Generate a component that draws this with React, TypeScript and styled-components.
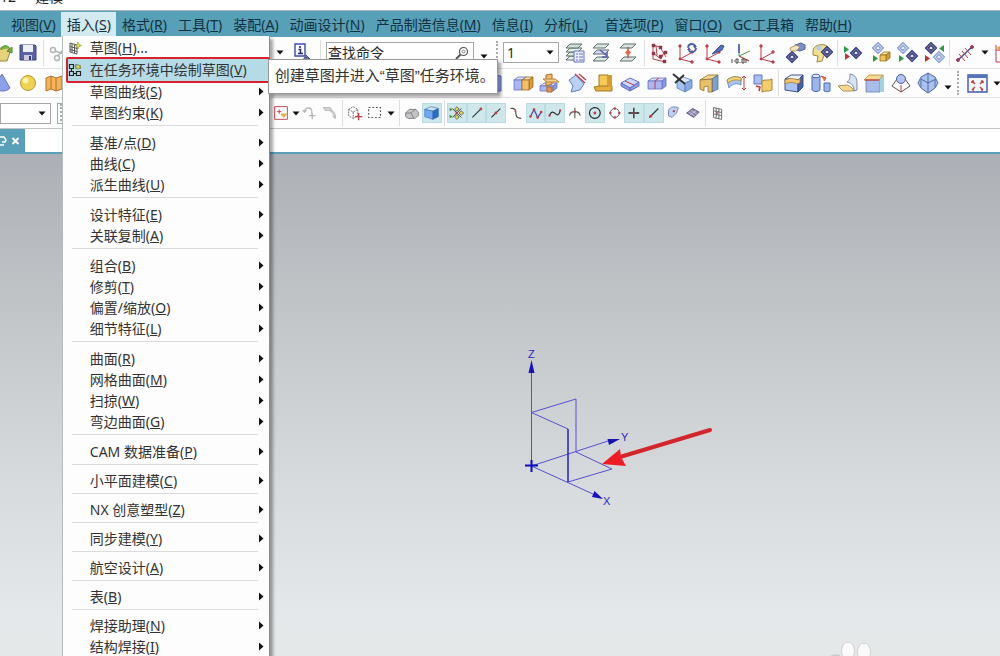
import React from 'react';
import styled, { createGlobalStyle, css } from 'styled-components';

const Global = createGlobalStyle`
  * { box-sizing: border-box; }
  body {
    margin: 0;
    font-family: "Noto Sans", "Noto Sans CJK SC", sans-serif;
    font-size: 14px;
    line-height: 20px;
    color: #2b2b2b;
  }
  button, input, select { font: inherit; color: inherit; }
`;

const teal = '#57a0b8';

const Page = styled.div`
  display: flex;
  flex-direction: column;
  height: 100vh;
  overflow: hidden;
  background: #fff;
`;

const TitleBar = styled.header`
  display: flex;
  align-items: flex-end;
  height: 10px;
  padding-bottom: 3px;
  overflow: hidden;
  white-space: pre;
  color: #222;
`;

const MenuBar = styled.nav`
  display: flex;
  height: 27px;
  padding-left: 5px;
  background: ${teal};
  border-top: 1px solid #a9b6ba;
  color: #12303f;
`;

const MenuSlot = styled.div<{ $apart?: boolean }>`
  position: relative;
  display: flex;
  padding-top: 1px;
  margin-left: ${(p) => (p.$apart ? '6px' : '0')};
`;

const MenuButton = styled.button<{ $open?: boolean }>`
  padding: 0 5px 0 6px;
  border: 0;
  white-space: nowrap;
  background: ${(p) => (p.$open ? '#d3eaf0' : 'transparent')};
`;

const DropDown = styled.div`
  position: absolute;
  z-index: 5;
  top: 25px;
  left: 1px;
  width: 208px;
  padding: 1px 0 4px 4px;
  background: #fdfdfd;
  border-left: 1px solid #b5bcc0;
  border-right: 1px solid #8c8c8c;
  box-shadow: 3px 3px 3px rgba(0, 0, 0, 0.35);
  color: #333;
`;

const Separator = styled.hr<{ $compact?: boolean }>`
  height: 1px;
  margin: 2px 11px ${(p) => (p.$compact ? '5px' : '6px')} 5px;
  border: 0;
  background: #dcdcdc;
`;

const Command = styled.button<{ $tall?: boolean; $marked?: boolean }>`
  position: relative;
  display: flex;
  align-items: center;
  width: 100%;
  height: ${(p) => (p.$tall ? '22px' : '21px')};
  padding: 0 5px 0 0;
  border: 0;
  background: transparent;
  text-align: left;
  white-space: nowrap;
  ${(p) =>
    p.$marked &&
    css`
      background: #b4dbe6;
      &::after {
        content: '';
        position: absolute;
        inset: -2px -1px -2px -1px;
        border: 2px solid #d9202c;
        border-radius: 2px;
      }
    `}
`;

const CommandIcon = styled.span`
  display: flex;
  width: 23px;
  padding-left: 1px;
`;

const CommandText = styled.span`
  flex: 1;
`;

const Tip = styled.div`
  position: absolute;
  z-index: 6;
  top: 48px;
  left: 207px;
  height: 35px;
  padding: 6px 9px 0 6px;
  width: 230px;
  background: #fff;
  border: 1px solid #999;
  box-shadow: 3px 3px 3px rgba(0, 0, 0, 0.35);
  font-family: "Liberation Sans", "Noto Sans CJK SC", sans-serif;
  font-size: 15px;
  white-space: nowrap;
  color: #333;
`;

const ToolRow = styled.div<{ $height: number; $last?: boolean }>`
  display: flex;
  align-items: center;
  flex: none;
  height: ${(p) => p.$height}px;
  overflow: hidden;
  border-bottom: 1px solid ${(p) => (p.$last ? '#c4c4c6' : '#e2e2e2')};
  background: #fdfdfd;
`;

const Lead = styled.div<{ $width: number; $pull?: boolean }>`
  display: flex;
  align-items: center;
  flex: none;
  width: ${(p) => p.$width}px;
  & > :first-child {
    margin-left: ${(p) => (p.$pull ? '-11px' : '0')};
  }
`;

const Space = styled.span<{ $width: number }>`
  flex: none;
  width: ${(p) => p.$width}px;
`;

const Cluster = styled.div<{ $width: number }>`
  display: grid;
  grid-auto-flow: column;
  grid-auto-columns: 1fr;
  flex: none;
  width: ${(p) => p.$width}px;
`;

const ToolButton = styled.button<{ $on?: boolean; $small?: boolean }>`
  display: flex;
  align-items: center;
  justify-content: center;
  min-width: 0;
  height: ${(p) => (p.$small ? '20px' : '26px')};
  padding: 0;
  border: 0;
  background: ${(p) => (p.$on ? '#cde7ea' : 'transparent')};
  box-shadow: ${(p) => (p.$on ? 'inset 0 0 0 1px #b9dce2' : 'none')};
`;

const CaretButton = styled.button<{ $width: number; $low?: boolean }>`
  display: flex;
  align-items: center;
  justify-content: center;
  flex: none;
  width: ${(p) => p.$width}px;
  height: 22px;
  padding: ${(p) => (p.$low ? '8px 0 0' : '0')};
  border: 0;
  background: transparent;
`;

const Divider = styled.span`
  flex: none;
  width: 1px;
  height: 26px;
  margin: 0 2px;
  background: #dedede;
`;

const Grip = styled.span`
  flex: none;
  width: 3px;
  height: 24px;
  margin: 0 4px 0 2px;
  border-left: 2px dotted #a9a9a9;
`;

const Field = styled.label<{ $width: number }>`
  display: flex;
  align-items: center;
  justify-content: space-between;
  flex: none;
  width: ${(p) => p.$width}px;
  height: 21px;
  padding-right: 4px;
  border: 1px solid #a6a6a6;
  background: #fff;
`;

const Well = styled.div`
  flex: 1;
  display: flex;
  height: 21px;
  margin: 0 6px;
  border: 1px solid #a6a6a6;
  overflow: hidden;
`;

const TextInput = styled.input`
  flex: 1;
  min-width: 0;
  height: 19px;
  padding: 0 1px;
  border: 0;
  outline: 0;
  background: transparent;
`;

const Choice = styled.select`
  flex: 1;
  min-width: 0;
  height: 19px;
  padding: 0 3px;
  border: 0;
  outline: 0;
  appearance: none;
  background: transparent;
`;

const TabStrip = styled.div`
  display: flex;
  flex: none;
  height: 25px;
  border-bottom: 2px solid ${teal};
  background: #fff;
`;

const Tab = styled.button`
  display: flex;
  align-items: center;
  width: 25px;
  padding: 0;
  border: 0;
  background: ${teal};
`;

const Viewport = styled.main`
  position: relative;
  flex: 1;
  overflow: hidden;
  background: linear-gradient(#acb0b6 0, #c7cacc 39%, #d8dcde 68%, #e4e8ea 92%, #e4e8e9 100%);
`;

const Datum = styled.svg`
  position: absolute;
  top: 186px;
  left: 50%;
`;

const Watermark = styled.svg`
  position: absolute;
  right: 120px;
  bottom: 0;
`;

const Caret = () => (
  <svg width="8" height="5" viewBox="0 0 8 5" aria-hidden="true">
    <path d="M0.5 0.5h7L4 4.5z" fill="#111" />
  </svg>
);

const Arrow = () => (
  <svg width="6" height="9" viewBox="0 0 6 9" aria-hidden="true">
    <path d="M1 0.5L5.5 4.5L1 8.5z" fill="#111" />
  </svg>
);

const B = '#6672c4';
const O = '#e8a23c';
const G = '#5c6f6b';
const R = '#c23a48';
const N = '#3c3f78';

const box = (x: number, y: number, w: number, h: number, face: string, top: string, side: string, edge: string) => (
  <g stroke={edge} strokeWidth="0.8" strokeLinejoin="round">
    <path d={`M${x} ${y + 3}l4-3h${w}l-4 3z`} fill={top} />
    <path d={`M${x + w} ${y + 3}l4-3v${h}l-4 3z`} fill={side} />
    <path d={`M${x} ${y + 3}h${w}v${h}h-${w}z`} fill={face} />
  </g>
);

const sheet = (y: number, fill: string) => (
  <path d={`M2 ${y + 4}l4-4h12l-4 4z`} fill={fill} stroke={G} strokeWidth="1" />
);

const gem = (x: number, y: number, dark: boolean) => (
  <g stroke={dark ? N : '#8da0d4'} strokeWidth="1.2" strokeLinejoin="round">
    <path d={`M${x} ${y - 5.5}l5.5 5.5l-5.5 5.5l-5.5-5.5z`} fill={dark ? '#747ab0' : '#cfdcf5'} />
    <path d={`M${x} ${y - 2.5}l2.5 2.5l-2.5 2.5l-2.5-2.5z`} fill="#f0f3fb" />
  </g>
);

const play = (x: number, y: number, fill: string, flip = false) => (
  <path d={flip ? `M${x + 5} ${y}v7l-5-3.5z` : `M${x} ${y}v7l5-3.5z`} fill={fill} />
);

const axes = (
  <g stroke={R} strokeWidth="1" fill={R}>
    <path d="M4 5v12l12 3M4 17l11-6" fill="none" />
    <circle cx="4" cy="4" r="1.2" /><circle cx="16" cy="20" r="1.2" /><circle cx="16" cy="10" r="1.2" /><circle cx="4" cy="17" r="1" />
  </g>
);

const art: Record<string, React.ReactNode> = {
  open: <g><path d="M2 9l5-3h10l2 4-3 9H4z" fill="#e6d27a" stroke="#9a8a3a" /><path d="M10 8c0-5 7-6 9-1l-3 2 5 2V5" fill="#79b84e" stroke="#4a8a2c" /></g>,
  save: <g><path d="M3 3h15l1 1v14H3z" fill="#5b62a6" stroke="#3d4380" /><path d="M6 3h10v7H6z" fill="#eef0fa" /><path d="M7 13h8v5H7z" fill="#ccd" /><path d="M12 14h2v4h-2z" fill="#33386e" /></g>,
  cut: <g stroke="#b4b4b4" strokeWidth="1.4" fill="none"><circle cx="5" cy="8" r="2.5" /><circle cx="9" cy="16" r="2.5" /><path d="M7 9l12 4M10 14L18 4" /></g>,
  info: <g><path d="M3 2h10v12H3z" fill="#fff" stroke="#3e47a8" strokeWidth="1.4" /><path d="M8 4v2M6.500 7.500h2v4M6 11.500h5" stroke="#222a6a" strokeWidth="1.6" fill="none" /><path d="M11 18l2-3 3 1 3 3M14 13l6 6h-6z" fill="#8f95c8" stroke="#4a508c" /></g>,
  layers: <g>{sheet(14, '#e6efe9')}{sheet(10, '#dbe8e2')}{sheet(6, '#e6efe9')}{sheet(2, '#cfe0d8')}<path d="M10 9h10v11H10z" fill="#eceefd" stroke={B} /><path d="M12 12h2M15 12h4M12 15h2M15 15h4M12 18h2M15 18h4" stroke={B} /></g>,
  layerMove: <g>{sheet(15, '#dbe8e2')}{sheet(8, '#d7dcf5')}{sheet(2, '#dbe8e2')}<path d="M9 8l7 6M16 10v5h-5" stroke="#5b64a4" strokeWidth="1.6" fill="none" /></g>,
  layerPick: <g>{sheet(15, '#dbe8e2')}{sheet(2, '#dbe8e2')}<path d="M10 5v11" stroke={R} strokeWidth="1.200" /><path d="M10 7l3 3.500-3 3.500-3-3.500z" fill="#ee6a45" /></g>,
  wcsDyn: <g stroke={R} fill="none"><path d="M4 3v14l12 3M4 3l7 2 6 10M4 11l8 6 3-7M7 4l1 9" /><path d="M3 2h3v3H3zM10 4h3v3h-3zM3 10h3v3H3zM10 13h3v3h-3zM15 9h3v3h-3zM14 18h3v3h-3z" fill="#6a4052" strokeWidth="0.500" /></g>,
  wcsRot: <g>{axes}<circle cx="16" cy="6" r="4" stroke="#4a5ca4" strokeWidth="1.800" fill="none" strokeDasharray="10 2.500" /><path d="M11 8l2-3 2 3zM17 4l4 0-2 3z" fill="#4a5ca4" /></g>,
  wcsSet: <g>{axes}<path d="M9 12l9-9 3 1-2 4-7 3z" fill="#5570bd" stroke="#3a4f94" /></g>,
  wcsAbs: <g><path d="M9 3v11l10 5M9 14l11-5" stroke="#4d9a56" fill="none" /><path d="M9 2v9" stroke="#4a58b4" strokeWidth="1.600" /><path d="M9 14l10 5" stroke={R} /><path d="M2 17v4M4 19h1M6 17h2v4H6zM10 20v1M12 17h2v4h-2zM16 17v4" stroke="#333" strokeWidth="0.900" fill="none" /></g>,
  wcs: axes,
  show: <g>{gem(8, 15, true)}<path d="M11 3l6-2 4 2v4l-5 2-6-2z" fill="#7a8fcc" stroke="#52649f" /><path d="M6 6l6-3 4 2-4 4-5 0z" fill="#f4e3b8" stroke="#a8874a" strokeWidth="0.800" /></g>,
  edit: <g><path d="M2 8c1-6 14-8 16-1l2 3-6 1-3 8-5 1 1-6-5-1z" fill="#f1df8d" stroke="#9b8742" /><circle cx="8" cy="6" r="2.500" fill="#b3cbef" />{gem(16, 10, true)}</g>,
  flow: <g>{play(2, 4, '#2d9b44')}{play(3, 11, '#c33038')}{gem(14, 11, true)}</g>,
  flowBox: <g>{gem(9, 6, false)}{play(4, 13, '#2d9b44')}{box(11, 10, 6, 6, '#f0c552', '#fae39a', '#d5a02e', '#93701e')}</g>,
  flowDown: <g>{gem(7, 6, false)}{play(3, 13, '#2d9b44')}{gem(16, 14, true)}</g>,
  flowSwap: <g>{gem(8, 6, true)}{play(16, 3, '#2d9b44', true)}{play(2, 13, '#c33038')}{gem(16, 15, false)}</g>,
  measure: <g stroke={R} fill="none"><path d="M3 19L19 4" stroke="#4a4f94" strokeWidth="1.500" /><path d="M5 12l6 7M8 9l6 7M11 6l6 7" /><circle cx="4" cy="18" r="1.500" fill="#4a4f94" /><circle cx="18" cy="5" r="1.500" fill="#4a4f94" /></g>,
  chart: <g><path d="M3 3v17h17" fill="none" stroke={R} /><path d="M3 8c8 0 9 6 16 8" stroke={R} fill="none" /><path d="M5 5l6 6 8-8" stroke={O} strokeWidth="3" fill="none" /></g>,
  cone: <path d="M11 2l8 14c-3 4-12 4-16 0z" fill="#8fa0ea" stroke={B} />,
  ball: <g><circle cx="11" cy="11" r="7.500" fill="#efd350" stroke="#b39a35" /><circle cx="8.500" cy="8.500" r="3" fill="#fbf0a8" /></g>,
  book: <path d="M3 6l5-2 5 2 6-2v13l-6 2-5-2-5 2zM8 4v13M13 6v13" fill="#f3b356" stroke="#b4742a" />,
  slab: <path d="M6 19V8c0-4 4-5 9-4v15z" fill="#9cadf0" stroke={B} />,
  split: <g>{box(1, 5, 8, 10, '#a9b8f2', '#d8e0fb', '#8b9ae0', B)}{box(9, 5, 7, 10, '#f3c069', '#fae0a4', '#dd9a3a', '#a06a24')}</g>,
  cross: <g>{box(1, 11, 13, 5, '#a9b8f2', '#d8e0fb', '#8b9ae0', B)}<path d="M7 3l6-1v10l-6 2z" fill="#f3bd68" stroke="#a86e28" /><path d="M4 7h12l4 3H8z" fill="#f8d08a" stroke="#b8803a" /><path d="M8 15h5v5H8z" fill="#ee8e4a" stroke="#a86e28" /></g>,
  draft: <g><path d="M3 8l7-5 8 9-4 6-9 2 2-6z" fill="#b8d2f4" stroke="#5f83c0" /><path d="M9 2l10 9M13 2l7 6" stroke={R} strokeWidth="1.300" /></g>,
  block: <g><path d="M7 3h9v13H7z" fill="#f4cb55" stroke="#a07b27" /><path d="M2 15l5-1h13v5H4z" fill="#e8af3b" stroke="#a07b27" /><path d="M16 3h4v12h-4z" fill="#d99a30" /></g>,
  plate: <g strokeLinejoin="round"><path d="M2 11l9-5 9 4-9 6z" fill="#cfd8fa" stroke={B} /><path d="M2 11v3l9 5v-3zM11 16v3l9-5v-4z" fill="#8d9bea" stroke={B} /><path d="M6 9l9 4" stroke={R} /></g>,
  bar: <g>{box(2, 6, 14, 8, '#a9b8f2', '#d8e0fb', '#8b9ae0', B)}<path d="M9 17V9l4-3" stroke={R} fill="none" /></g>,
  trim: <g stroke="#5c82bd" strokeWidth="0.800" strokeLinejoin="round"><path d="M5 8l6-3 9 3-7 3z" fill="#dbe8fb" /><path d="M5 8l8 3v9l-8-4z" fill="#a3c2ee" /><path d="M13 11l7-3v8l-7 4z" fill="#86abe2" /><path d="M1 2l12 10M12 3L3 11" stroke="#333" strokeWidth="1.800" /></g>,
  shell: <g strokeLinejoin="round" strokeWidth="0.800"><path d="M1 8l8-5 10 0-6 4z" fill="#f6d88a" stroke="#8f6f2e" /><path d="M13 7l6-4v14l-6 3z" fill="#7c9fd8" stroke="#4c6ca0" /><path d="M1 8l12-1v13H9v-6l-4 1v4l-4-2z" fill="#e9c065" stroke="#8f6f2e" /></g>,
  bend: <g><path d="M2 8c5-4 10-4 14-2v7c-4-2-8-2-12 3z" fill="#a9c6ee" stroke="#5c80b8" strokeWidth="0.800" /><path d="M2 8c5-4 10-4 14-2v3C12 7 6 8 3 11z" fill="#f3d473" stroke="#a58a39" strokeWidth="0.800" /><path d="M19 4v14M17 6l2-2 2 2M17 16l2 2 2-2" stroke={R} fill="none" /></g>,
  replace: <g><path d="M2 3h8v9H2z" fill="#a9c0f0" stroke={B} /><path d="M10 9c4-2 7 0 10-2v11c-3 2-7 0-10 2z" fill="#f3ce6b" stroke="#a8833a" /><path d="M4 14l4 1-1 4" stroke={R} fill="none" strokeWidth="1.600" /></g>,
  cube: <g strokeLinejoin="round" strokeWidth="0.900"><path d="M2 7l6-4h12l-5 5z" fill="#eef2fc" stroke="#2f4480" /><path d="M2 7l13 1v12L2 18z" fill="#a9c2f2" stroke="#2f4480" /><path d="M15 8l5-5v12l-5 5z" fill="#4462a8" stroke="#2f4480" /><path d="M2 8c4-2 8-2 13 0l2-2v4l-2 2c-5-2-9-2-13 0z" fill="#f3c46c" stroke="#9a6d2b" strokeWidth="0.700" /></g>,
  tubes: <g stroke="#4d68ab"><path d="M2 4v14c2 2 6 2 8 0V4z" fill="#9db5ec" /><ellipse cx="6" cy="4" rx="4" ry="1.800" fill="#dce6fb" /><path d="M14 11v8c2 1 4 1 6 0v-8z" fill="#9db5ec" /><path d="M11 4l5 2-2 3" stroke={R} fill="#ee8a3c" /></g>,
  flange: <g><path d="M13 2c6 1 7 5 7 10v6l-3 1c0-5-2-8-7-9 3-2 3-4 3-8z" fill="#d6e2f6" stroke="#65718e" strokeWidth="0.800" /><path d="M1 14l9-1c3 1 6 3 7 6H6z" fill="#f4d88d" stroke="#9b8243" strokeWidth="0.800" /></g>,
  face: <g><path d="M3 7h14v13H3z" fill="#a9bde8" stroke="#6a7fb2" strokeWidth="0.800" /><path d="M17 3h4v17h-4z" fill="#9fd4e2" /><path d="M1 8l5-5h14l-4 5z" fill="#f3db90" stroke="#b58d3a" strokeWidth="0.800" /><path d="M2 8h14" stroke={R} strokeWidth="1.300" /></g>,
  pyramid: <g><path d="M7 7L2 14l9 6 9-6-5-7" fill="#fff" stroke="#6a4a4a" /><path d="M11 20v-7" stroke={R} /><circle cx="11" cy="7" r="4.500" fill="#b3c3f0" stroke="#4a5a9c" /></g>,
  octa: <g stroke="#4f6aa4" strokeLinejoin="round"><path d="M11 1l7 4 3 6-3 5-7 5-7-5-3-5 3-6z" fill="#aac3ee" /><path d="M11 1v10M4 7l7 4 8-4M11 11v10M4 7v8M18 7v8" fill="none" /></g>,
  fit: <g><path d="M2 3h19v17H2z" fill="#f4f6fc" stroke="#3f58a8" strokeWidth="1.400" /><path d="M2 3h19v3H2z" fill="#5873bd" /><path d="M6 9l3 3M17 9l-3 3M6 18l3-3M17 18l-3-3M6 9h2M6 9v2M17 9h-2M17 9v2M6 18h2M17 18h-2" stroke="#c2453c" strokeWidth="1.500" /></g>,
  filter: <g><path d="M4 4h14v14H4z" fill="#fff" stroke={R} /><path d="M9 7v5M6.500 9.500h5" stroke={R} /><path d="M11 12h6l-3 4z" fill="#f0c03c" stroke="#a87c20" strokeWidth="0.600" /></g>,
  undo: <g stroke="#b5b5b5" strokeWidth="1.400" fill="none"><path d="M5 10c0-6 8-6 8 0v3M3 8l2 2 2-2M10 14h7M13.500 11v7" /></g>,
  redo: <g stroke="#bdbdbd" strokeWidth="1.400" fill="#ddd"><path d="M4 5h7l2 3H6zM10 8c5 0 7 3 7 9M14 14l3 3" /></g>,
  cubeSel: <g stroke="#666" fill="none"><path d="M4 7l5-3 5 3v7l-5 3-5-3zM4 7l5 3 5-3M9 10v7" strokeDasharray="2 1" /><path d="M15 11v8M11 15h8" stroke={R} strokeWidth="1.500" /></g>,
  marquee: <path d="M4 5h13v11H4z" fill="none" stroke="#555" strokeWidth="1.200" strokeDasharray="2 2" />,
  solid: <path d="M4 11l4-4h7l3 3v4l-4 3H7l-3-2zM4 11h6l3 6M10 11l5-4" fill="#c6c6c9" stroke="#77777c" strokeWidth="0.900" />,
  blue: <g stroke="#2d62b0" strokeWidth="0.600"><path d="M3 7l7-3 8 2-6 3z" fill="#cfe4fb" /><path d="M3 7l9 2v9l-9-3z" fill="#6fa9ee" /><path d="M12 9l6-3v9l-6 3z" fill="#2f6cc8" /></g>,
  snap: <g><path d="M6 6l10 10M16 6L6 16" stroke="#333" /><path d="M11 4l2.500 2.500L11 9 8.500 6.500zM11 13l2.500 2.500L11 18l-2.500-2.500zM16 8.500l2.500 2.500-2.500 2.500-2.500-2.500z" fill="#e6d64a" stroke="#444" strokeWidth="0.800" /><path d="M3 5l3 2-3 2zM3 13l3 2-3 2z" fill="#2d8b44" /><circle cx="11" cy="11" r="1.500" fill={R} /></g>,
  end: <g><path d="M6 16L15 7" stroke="#333" strokeWidth="1.200" /><circle cx="15.500" cy="6.500" r="1.600" fill={R} /></g>,
  mid: <g><path d="M6 16L16 6" stroke="#333" strokeWidth="1.200" /><circle cx="11" cy="11" r="1.600" fill={R} /></g>,
  hook: <g><path d="M5 6c5-1 6 2 6 5s1 6 6 6" stroke="#444" fill="none" strokeWidth="1.200" /><circle cx="10.500" cy="9" r="1" fill={R} /></g>,
  zig: <g><path d="M5 15l4-8 4 9 4-6" stroke="#4a3fa0" fill="none" strokeWidth="1.300" /><g fill={R}><circle cx="5" cy="15" r="1.400" /><circle cx="9" cy="7" r="1.400" /><circle cx="13" cy="16" r="1.400" /><circle cx="17" cy="10" r="1.400" /></g></g>,
  wave: <g><path d="M5 14c2-6 5-4 7-2s4 1 5-4" stroke="#333" fill="none" strokeWidth="1.400" /><circle cx="5" cy="14" r="1.300" fill={R} /><circle cx="17" cy="8" r="1.300" fill={R} /></g>,
  meet: <g><path d="M5 14c1-6 11-6 12 0M11 5v12" stroke="#555" fill="none" strokeWidth="1.200" /><circle cx="11" cy="9.500" r="1.200" fill={R} /></g>,
  centre: <g><circle cx="11" cy="11" r="6" fill="none" stroke="#222" strokeWidth="1.300" /><circle cx="11" cy="11" r="1.600" fill={R} /></g>,
  quad: <g><circle cx="11" cy="11" r="5" fill="none" stroke="#555" /><g fill={R}><circle cx="11" cy="6" r="1.400" /><circle cx="11" cy="16" r="1.400" /><circle cx="6" cy="11" r="1.400" /><circle cx="16" cy="11" r="1.400" /></g></g>,
  plus: <g><path d="M11 5v12M5 11h12" stroke="#222" strokeWidth="1.400" /><circle cx="11" cy="11" r="1.200" fill={R} /></g>,
  onCurve: <g><path d="M6 16L16 6" stroke="#333" strokeWidth="1.300" /><circle cx="7.500" cy="14.500" r="1.600" fill={R} /></g>,
  surf: <g><path d="M5 8c2-5 8-4 11-3l-2 6-5 5-4-2z" fill="#bfd0f0" stroke="#6c7fae" /><circle cx="11" cy="9" r="1.300" fill={R} /></g>,
  mesh: <g><path d="M4 11l7-5 7 4-6 6z" fill="#8c86b2" stroke="#55507c" /><path d="M6 9.500l7 5M9 8l7 4.500M8 13l7-5" stroke="#ddd" strokeWidth="0.700" /></g>,
  grid: <g stroke="#666" fill="none"><path d="M6 5l9 2v11l-9-2zM9 5.500v11.500M12 6.200v11.500M6 8.500l9 2M6 12l9 2" /><circle cx="10" cy="11" r="1" fill={R} stroke="none" /></g>,
};

const Glyph = ({ name, size = 22 }: { name: string; size?: number }) => (
  <svg width={size} height={size} viewBox="0 0 22 22" fill="none" aria-hidden="true">
    {art[name]}
  </svg>
);

const Tools = ({ width, names, on = [], small }: { width: number; names: string[]; on?: string[]; small?: boolean }) => (
  <Cluster $width={width}>
    {names.map((n) => (
      <ToolButton key={n} type="button" aria-label={n} $on={on.includes(n)} $small={small}>
        <Glyph name={n} />
      </ToolButton>
    ))}
  </Cluster>
);

type Entry = [label: string, key?: string, tail?: string];

const Label = ({ entry: [label, key, tail] }: { entry: Entry }) => (
  <>
    {label}
    {key && <>(<u>{key}</u>)</>}
    {tail}
  </>
);

const leftMenus: Entry[] = [['格式', 'R'], ['工具', 'T'], ['装配', 'A'], ['动画设计', 'N'], ['产品制造信息', 'M'], ['信息', 'I'], ['分析', 'L']];
const rightMenus: Entry[] = [['首选项', 'P'], ['窗口', 'O'], ['GC工具箱'], ['帮助', 'H']];

const groups: Entry[][] = [
  [['草图曲线', 'S'], ['草图约束', 'K']],
  [['基准/点', 'D'], ['曲线', 'C'], ['派生曲线', 'U']],
  [['设计特征', 'E'], ['关联复制', 'A']],
  [['组合', 'B'], ['修剪', 'T'], ['偏置/缩放', 'O'], ['细节特征', 'L']],
  [['曲面', 'R'], ['网格曲面', 'M'], ['扫掠', 'W'], ['弯边曲面', 'G']],
  [['CAM 数据准备', 'P']],
  [['小平面建模', 'C']],
  [['NX 创意塑型', 'Z']],
  [['同步建模', 'Y']],
  [['航空设计', 'A']],
  [['表', 'B']],
  [['焊接助理', 'N'], ['结构焊接', 'I']],
];

const SketchIcon = () => (
  <svg width="14" height="14" viewBox="0 0 14 14" fill="none" aria-hidden="true">
    <path d="M2 2l7 2v9l-7-2zM4 3v8M6.500 4v8M2 5.500l7 2M2 8.500l7 2" stroke="#555" />
    <path d="M10 1l1 2.500 2.500 1-2.500 1L10 8 9 5.500 7 4.500l2-1z" fill="#e8d843" stroke="#6d8a30" strokeWidth="0.500" />
  </svg>
);

const TaskIcon = () => (
  <svg width="14" height="14" viewBox="0 0 14 14" fill="none" aria-hidden="true">
    <path d="M1.500 1.500h4v4h-4zM1.500 8.500h4v4h-4zM8.500 8.500h4v4h-4zM3.500 5.500v3M5.500 10.500h3" stroke="#222" strokeWidth="1.200" />
    <path d="M8 6V1M12 6V2" stroke="#555" />
    <path d="M10 1l1 2 2 1-2 1-1 2-1-2-2-1 2-1z" fill="#e8d843" stroke="#6d8a30" strokeWidth="0.500" />
  </svg>
);

const InsertMenu = () => (
  <DropDown role="menu">
    <Command type="button" $tall>
      <CommandIcon><SketchIcon /></CommandIcon>
      <CommandText><Label entry={['草图', 'H', '...']} /></CommandText>
    </Command>
    <Command type="button" $tall $marked>
      <CommandIcon><TaskIcon /></CommandIcon>
      <CommandText><Label entry={['在任务环境中绘制草图', 'V']} /></CommandText>
    </Command>
    {groups.map((items, i) => (
      <React.Fragment key={items[0][0]}>
        {i > 0 && <Separator $compact={i > 5} />}
        {items.map((entry) => (
          <Command key={entry[0]} type="button">
            <CommandIcon />
            <CommandText><Label entry={entry} /></CommandText>
            <Arrow />
          </Command>
        ))}
      </React.Fragment>
    ))}
  </DropDown>
);

export default function App() {
  return (
    <Page>
      <Global />
      <TitleBar>12 -   建模</TitleBar>
      <MenuBar>
        <MenuSlot><MenuButton type="button"><Label entry={['视图', 'V']} /></MenuButton></MenuSlot>
        <MenuSlot>
          <MenuButton type="button" $open><Label entry={['插入', 'S']} /></MenuButton>
          <InsertMenu />
          <Tip role="tooltip">创建草图并进入“草图”任务环境。</Tip>
        </MenuSlot>
        {leftMenus.map((m) => (
          <MenuSlot key={m[0]}><MenuButton type="button"><Label entry={m} /></MenuButton></MenuSlot>
        ))}
        {rightMenus.map((m, i) => (
          <MenuSlot key={m[0]} $apart={i === 0}><MenuButton type="button"><Label entry={m} /></MenuButton></MenuSlot>
        ))}
      </MenuBar>

      <ToolRow $height={32}>
        <Lead $width={272} $pull>
          <Tools width={52} names={['open', 'save']} />
          <Divider />
          <Tools width={26} names={['cut']} />
        </Lead>
        <CaretButton type="button" aria-label="more" $width={16}><Caret /></CaretButton>
        <Tools width={30} names={['info']} />
        <Divider />
        <Space $width={3} />
        <Field $width={148}>
          <TextInput aria-label="查找命令" defaultValue="查找命令" />
          <svg width="14" height="14" viewBox="0 0 14 14" fill="none" aria-hidden="true">
            <circle cx="8.500" cy="5.500" r="4" stroke="#555" strokeWidth="1.200" />
            <circle cx="8.500" cy="5.500" r="1.500" stroke="#888" />
            <path d="M5.500 8.500L1 13" stroke="#555" strokeWidth="2" />
          </svg>
        </Field>
        <CaretButton type="button" aria-label="search options" $width={20} $low><Caret /></CaretButton>
        <Grip />
        <Field $width={56}>
          <Choice aria-label="图层" defaultValue="1"><option>1</option></Choice>
          <Caret />
        </Field>
        <Space $width={3} />
        <Tools width={80} names={['layers', 'layerMove', 'layerPick']} />
        <Divider />
        <Tools width={188} names={['wcsDyn', 'wcsRot', 'wcsSet', 'wcsAbs', 'wcs', 'show', 'edit']} />
        <Divider />
        <Tools width={107} names={['flow', 'flowBox', 'flowDown', 'flowSwap']} />
        <Divider />
        <Tools width={26} names={['measure']} />
        <CaretButton type="button" aria-label="measure options" $width={14}><Caret /></CaretButton>
        <Tools width={24} names={['chart']} />
      </ToolRow>

      <ToolRow $height={29}>
        <Lead $width={484} $pull>
          <Tools width={78} names={['cone', 'ball', 'book']} />
        </Lead>
        <Tools width={292} names={['slab', 'split', 'cross', 'draft', 'block', 'plate', 'bar', 'trim', 'shell', 'bend', 'replace']} />
        <Divider />
        <Tools width={160} names={['cube', 'tubes', 'flange', 'face', 'pyramid', 'octa']} />
        <CaretButton type="button" aria-label="more features" $width={14} $low><Caret /></CaretButton>
        <Grip />
        <Tools width={26} names={['fit']} />
        <CaretButton type="button" aria-label="view options" $width={14}><Caret /></CaretButton>
      </ToolRow>

      <ToolRow $height={31} $last>
        <Lead $width={271}>
          <Field $width={51}>
            <Choice aria-label="选择过滤器" defaultValue=""><option value="" /></Choice>
            <Caret />
          </Field>
          <Well><Grip /></Well>
        </Lead>
        <Tools small width={20} names={['filter']} />
        <CaretButton type="button" aria-label="filter options" $width={9}><Caret /></CaretButton>
        <Tools small width={40} names={['undo', 'redo']} />
        <Divider />
        <Tools small width={40} names={['cubeSel', 'marquee']} />
        <CaretButton type="button" aria-label="selection options" $width={12}><Caret /></CaretButton>
        <Divider />
        <Tools small width={40} names={['solid', 'blue']} on={['blue']} />
        <Divider />
        <Tools
          small
          width={256}
          names={['snap', 'end', 'mid', 'hook', 'zig', 'wave', 'meet', 'centre', 'quad', 'plus', 'onCurve', 'surf', 'mesh']}
          on={['snap', 'end', 'mid', 'zig', 'wave', 'centre', 'plus', 'onCurve']}
        />
        <Divider />
        <Tools small width={20} names={['grid']} />
      </ToolRow>

      <TabStrip>
        <Tab type="button" aria-label="close">
          <svg width="25" height="22" viewBox="0 0 25 22" fill="none" stroke="#fff" aria-hidden="true">
            <path d="M0 7h4l2 3-1 2H2M0 15h4" strokeWidth="1.500" />
            <path d="M12.500 8l6 6M18.500 8l-6 6" strokeWidth="2" />
          </svg>
        </Tab>
      </TabStrip>

      <Viewport>
        <Datum width="240" height="180" viewBox="0 0 240 180" fill="none">
          <g stroke="#5550cf" strokeWidth="1">
            <path d="M31.500 126V32M31.500 126L108 101M31.500 126L93 154" />
            <path d="M31.500 72.500L76 59V112M31.500 72.500L68 89" />
            <path d="M76 112L112 129L68 142" />
          </g>
          <path d="M68 89V142" stroke="#2420c4" strokeWidth="1.500" />
          <path d="M31.500 120v12M25 125.500h13" stroke="#0c0cc0" strokeWidth="2" />
          <g fill="#1612b8">
            <path d="M31.500 20l3 13h-6z" />
            <path d="M120 99l-11 6-1.500-6z" />
            <path d="M103 159l-11-2 2.500-6z" />
          </g>
          <g fill="#2a26c8" fontSize="11" fontFamily="Liberation Sans, sans-serif">
            <text x="28" y="18">Z</text>
            <text x="121" y="101">Y</text>
            <text x="103" y="165">X</text>
          </g>
          <path d="M210 90L120 117" stroke="#d4242c" strokeWidth="4" strokeLinecap="round" />
          <path d="M102 124L120 109L121 117L126 126z" fill="#f01c24" />
        </Datum>
        <Watermark width="50" height="16" viewBox="0 0 50 16">
          <path d="M0 16q4-3 10-1v1z" fill="#c9cbcc" />
          <ellipse cx="18" cy="11" rx="6.500" ry="9" fill="#fafafa" stroke="#d3cfcf" />
          <ellipse cx="34" cy="12" rx="6.500" ry="9" fill="#fafafa" stroke="#d3cfcf" />
        </Watermark>
      </Viewport>
    </Page>
  );
}
